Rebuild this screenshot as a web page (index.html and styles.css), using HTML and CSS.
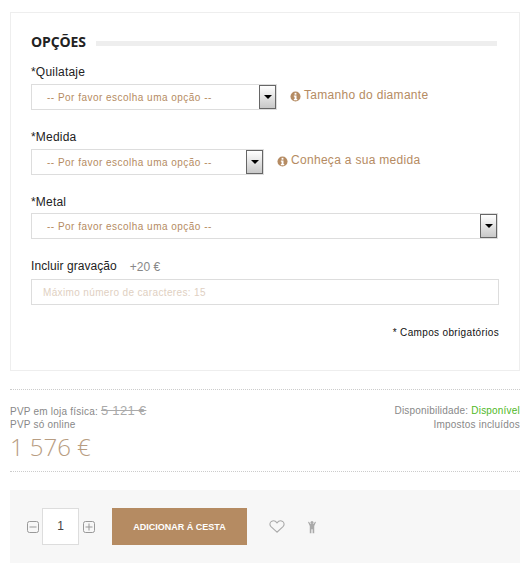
FILE: index.html
```html
<!DOCTYPE html>
<html lang="pt">
<head>
<meta charset="utf-8">
<title>Opções</title>
<link rel="stylesheet" href="styles.css">
</head>
<body>
<main class="page">
  <section class="panel">
    <div class="heading"><h2>OPÇÕES</h2><span class="heading-rule"></span></div>
    <div class="field field-quilate">
      <label class="label">*Quilataje</label>
      <div class="row">
        <div class="select select-a"><span>-- Por favor escolha uma opção --</span><i class="arrow"></i></div>
        <a class="info info-a"><svg class="info-icon" viewBox="0 0 12 12"><circle cx="6" cy="6" r="5.5" fill="#b58b62"/><rect x="5" y="2" width="2" height="2" fill="#fff"/><path d="M4.2 5h2.9v3.6h.8V10H4.2V8.6H5V6.3h-.8z" fill="#fff"/></svg>Tamanho do diamante</a>
      </div>
    </div>
    <div class="field field-medida">
      <label class="label">*Medida</label>
      <div class="row">
        <div class="select select-b"><span>-- Por favor escolha uma opção --</span><i class="arrow"></i></div>
        <a class="info info-b"><svg class="info-icon" viewBox="0 0 12 12"><circle cx="6" cy="6" r="5.5" fill="#b58b62"/><rect x="5" y="2" width="2" height="2" fill="#fff"/><path d="M4.2 5h2.9v3.6h.8V10H4.2V8.6H5V6.3h-.8z" fill="#fff"/></svg>Conheça a sua medida</a>
      </div>
    </div>
    <div class="field field-metal">
      <label class="label">*Metal</label>
      <div class="select select-c"><span>-- Por favor escolha uma opção --</span><i class="arrow"></i></div>
    </div>
    <div class="field field-gravacao">
      <div class="engrave-head"><label class="label-plain">Incluir gravação</label><span class="extra">+20 €</span></div>
      <div class="text-input">Máximo número de caracteres: 15</div>
    </div>
    <p class="required">* Campos obrigatórios</p>
  </section>

  <section class="price">
    <div class="price-left">
      <div class="line">PVP em loja física: <s class="old">5 121 €</s></div>
      <div class="line">PVP só online</div>
      <div class="now">1 576 €</div>
    </div>
    <div class="price-right">
      <div class="line">Disponibilidade: <span class="ok">Disponível</span></div>
      <div class="line">Impostos incluídos</div>
    </div>
  </section>

  <section class="buy">
    <svg class="qty-icon" viewBox="0 0 12 12"><rect x=".5" y=".5" width="11" height="11" rx="2" fill="none" stroke="#999"/><path d="M2.5 6h7" stroke="#999"/></svg>
    <div class="qty">1</div>
    <svg class="qty-icon" viewBox="0 0 12 12"><rect x=".5" y=".5" width="11" height="11" rx="2" fill="none" stroke="#999"/><path d="M2.5 6h7M6 2.5v7" stroke="#999"/></svg>
    <button class="add">ADICIONAR Á CESTA</button>
    <svg class="heart" viewBox="0 0 16 13"><path d="M8 12.2 2 6.6C.3 4.9.8 2.4 2.4 1.4 4.2.4 6.600 1 8 2.800 9.400 1 11.800.4 13.600 1.400c1.600 1 2.100 3.500.4 5.200z" fill="none" stroke="#aaa" stroke-width="1.100"/></svg>
    <svg class="figure" viewBox="0 0 9 14"><circle cx="4.500" cy="2" r="1.700" fill="#aaa"/><path d="M0 1.500 1 1l2 2.500h3L8 1l1 .5L7 6v8H5.200V9.500H3.800V14H2V6z" fill="#aaa"/></svg>
  </section>
</main>
</body>
</html>
```
FILE: styles.css
```css
* { box-sizing: border-box; }
html, body { margin: 0; padding: 0; height: 563px; overflow: hidden; background: #fff; }
body { font-family: "Liberation Sans", Arial, sans-serif; font-size: 12px; color: #222; }
.page { width: 510px; margin: 12px 0 0 10px; }

.panel { height: 359px; border: 1px solid #eeeeee; padding: 19px 21px 0 20px; }
.heading { display: flex; align-items: center; gap: 10px; height: 20px; }
.heading h2 { margin: 0; font: 700 14px/20px "Open Sans", sans-serif; letter-spacing: -.1px; color: #222; }
.heading-rule { flex: 1; height: 5px; margin: 2px 1px 0 0; background: #eeeeee; }

.label { display: block; height: 19px; line-height: 15px; font-size: 12px; letter-spacing: .2px; color: #222; }
.field-quilate { margin-top: 13px; }
.field-medida { margin-top: 20px; }
.field-metal { margin-top: 20px; }
.field-metal .label { height: 18px; }
.field-gravacao { margin-top: 18px; }
.row { display: flex; align-items: center; }

.select { position: relative; height: 26px; border: 1px solid #dddddd; padding-left: 15px; font-size: 10px; line-height: 26px; letter-spacing: .48px; color: #b58b62; background: #fff; }
.select-a { width: 246px; }
.select-b { width: 233px; }
.select-c { width: 467px; }
.arrow { position: absolute; top: 0; right: 0; width: 17px; height: 24px; border: 1px solid #666; background: linear-gradient(#fff, #c8c8c8); }
.arrow::after { content: ""; position: absolute; left: 4px; top: 9px; border: 4px solid transparent; border-top-color: #000; border-bottom: 0; }

.info { display: flex; align-items: center; margin-bottom: 4px; font-size: 12px; letter-spacing: .3px; color: #b58b62; }
.info-a { margin-left: 13px; }
.info-b { margin-left: 13px; }
.info-icon { width: 11px; height: 11px; margin-right: 3px; margin-top: 2px; flex: none; }

.engrave-head { display: flex; align-items: center; height: 17px; padding-top: 1px; }
.label-plain { font-size: 12px; letter-spacing: .07px; color: #222; }
.extra { margin-left: 13px; font-size: 12px; margin-top: 1px; color: #888; }
.text-input { width: 468px; height: 26px; margin-top: 5px; border: 1px solid #dddddd; padding-left: 11px; font-size: 10px; line-height: 26px; letter-spacing: .36px; color: #e0d0c2; }

.required { margin: 22px -1px 0 0; text-align: right; font-size: 10px; letter-spacing: .35px; color: #111; }

.price { display: flex; justify-content: space-between; height: 83px; margin-top: 18px; padding-top: 14px; border-top: 1px dotted #ccc; border-bottom: 1px dotted #ccc; font-size: 10px; color: #888; }
.line { height: 14px; line-height: 14px; letter-spacing: .22px; }
.old { font-size: 13px; letter-spacing: .3px; font-weight: 400; color: #aaa; }
.now { font: 300 24px/30px "Open Sans", sans-serif; letter-spacing: -.05px; color: #b89d82; }
.price-right { text-align: right; }
.price-right .line { letter-spacing: .2px; }
.ok { color: #4fb81f; }

.buy { display: flex; align-items: center; height: 73px; margin-top: 18px; padding-left: 17px; background: #f7f7f7; }
.qty-icon { width: 12px; height: 12px; flex: none; }
.qty { width: 37px; height: 37px; margin: 0 4px 0 3px; background: #fff; border: 1px solid #ddd; text-align: center; line-height: 35px; font-size: 12px; color: #444; }
.add { width: 135px; height: 37px; margin-left: 17px; border: 0; padding: 0; background: #b58b62; color: #fff; font: 700 9px "Liberation Sans", sans-serif; }
.heart { width: 16px; height: 13px; margin-left: 22px; flex: none; }
.figure { width: 8px; height: 14px; margin-left: 23px; flex: none; }
```
